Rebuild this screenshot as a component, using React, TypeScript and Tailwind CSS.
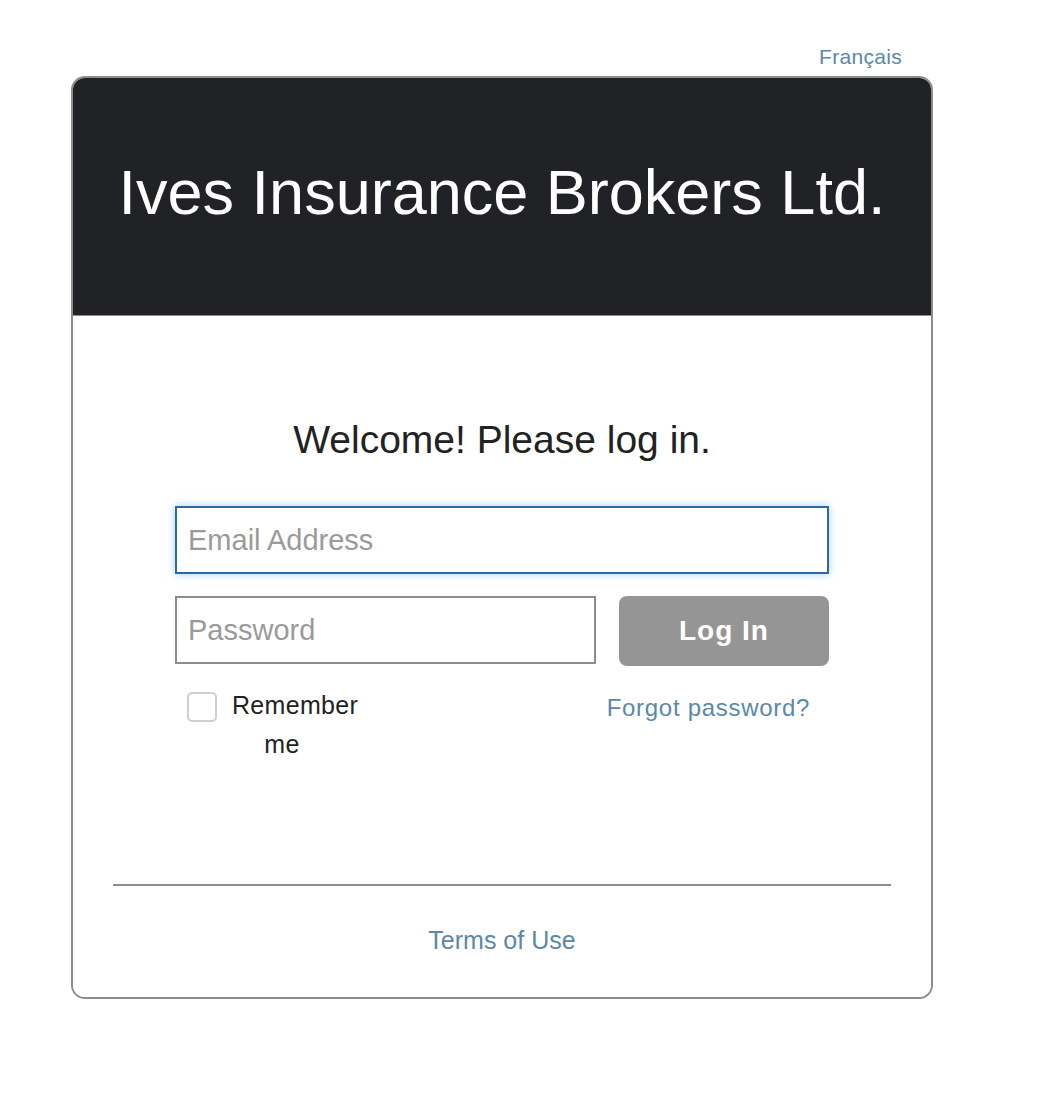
export default function App() {
  return (
    <div className="min-h-[1099px] bg-white font-['Liberation_Sans',Arial,sans-serif]">
      <div className="w-[862px] ml-[71px] pt-[44px]">
        <div className="flex justify-end pr-[31px] h-[32px]">
          <a href="#" className="text-[21px] leading-[26px] text-[#5b88aa] tracking-[0.3px]">Français</a>
        </div>

        <div className="border-2 border-[#8c8c8c] rounded-[14px] overflow-hidden">
          {/* header */}
          <div className="bg-[#212226] h-[238px] flex items-center justify-center border-b border-[#8c8c8c]">
            <h1 className="text-white text-[63px] leading-none pb-[8px]">Ives Insurance Brokers Ltd.</h1>
          </div>

          {/* body */}
          <div className="bg-white pt-[102px] pb-[41px]">
            <h2 className="text-center text-[39px] leading-[44px] text-[#222]">Welcome! Please log in.</h2>

            <div className="w-[654px] mx-auto mt-[44px]">
              <input
                placeholder="Email Address"
                className="w-full h-[68px] px-[11px] border-2 border-[#2a6aa5] shadow-[0_0_8px_rgba(102,175,233,0.6)] outline-none text-[29px] placeholder:text-[#9a9a9a]"
              />
              <div className="flex items-start gap-[23px] mt-[22px]">
                <input
                  type="password"
                  placeholder="Password"
                  className="w-[421px] h-[68px] px-[11px] border-2 border-[#8c8c8c] outline-none text-[29px] placeholder:text-[#9a9a9a]"
                />
                <button className="flex-1 h-[70px] rounded-[8px] bg-[#959595] text-white font-bold text-[28px] tracking-[1px]">
                  Log In
                </button>
              </div>

              <div className="flex items-start justify-between mt-[24px] pl-[12px] pr-[19px]">
                <div className="flex items-start gap-[15px]">
                  <span className="mt-[2px] w-[30px] h-[30px] rounded-[5px] border-2 border-[#cfcfcf] bg-white" />
                  <span className="w-[100px] text-center text-[25px] leading-[39px] -mt-[4px] text-[#222] tracking-[0.3px]">Remember me</span>
                </div>
                <a href="#" className="text-[24px] leading-[30px] text-[#5b88aa] tracking-[0.7px] mt-[3px]">Forgot password?</a>
              </div>
            </div>

            <div className="mx-[40px] mt-[120px] border-t-2 border-[#8c8c8c]" />
            <div className="text-center mt-[39px]">
              <a href="#" className="text-[25px] leading-[30px] text-[#5b88aa]">Terms of Use</a>
            </div>
          </div>
        </div>
      </div>
    </div>
  );
}
